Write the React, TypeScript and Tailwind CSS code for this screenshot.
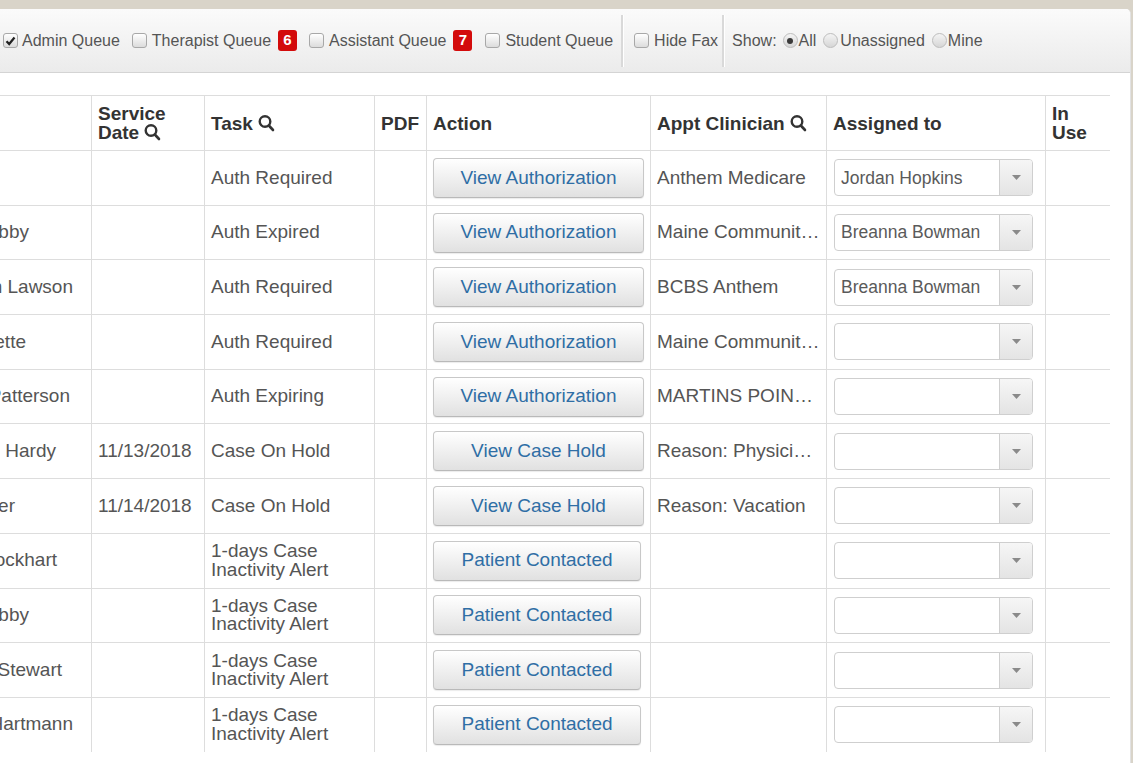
import React from 'react';

type Row = {
    name: string;
    nameW: string;
    date: string;
    task: string;
    action: string;
    actionW: string;
    clinician: string;
    assigned: string;
};

const rows: Row[] = [
    { name: '', nameW: 'w-0', date: '', task: 'Auth Required', action: 'View Authorization', actionW: 'w-[211px]', clinician: 'Anthem Medicare', assigned: 'Jordan Hopkins' },
    { name: 'Kelly Dobby', nameW: 'w-[29px]', date: '', task: 'Auth Expired', action: 'View Authorization', actionW: 'w-[211px]', clinician: 'Maine Community Health Options', assigned: 'Breanna Bowman' },
    { name: 'Megan Lawson', nameW: 'w-[73px]', date: '', task: 'Auth Required', action: 'View Authorization', actionW: 'w-[211px]', clinician: 'BCBS Anthem', assigned: 'Breanna Bowman' },
    { name: 'Paulette Goulette', nameW: 'w-[26px]', date: '', task: 'Auth Required', action: 'View Authorization', actionW: 'w-[211px]', clinician: 'Maine Community Health Options', assigned: '' },
    { name: 'Ann Patterson', nameW: 'w-[70px]', date: '', task: 'Auth Expiring', action: 'View Authorization', actionW: 'w-[211px]', clinician: 'MARTINS POINT HEALTH CARE', assigned: '' },
    { name: 'Jim Hardy', nameW: 'w-[56px]', date: '11/13/2018', task: 'Case On Hold', action: 'View Case Hold', actionW: 'w-[211px]', clinician: 'Reason: Physician Order', assigned: '' },
    { name: 'Ann Miller', nameW: 'w-[15px]', date: '11/14/2018', task: 'Case On Hold', action: 'View Case Hold', actionW: 'w-[211px]', clinician: 'Reason: Vacation', assigned: '' },
    { name: 'Sara Lockhart', nameW: 'w-[57px]', date: '', task: '1-days Case Inactivity Alert', action: 'Patient Contacted', actionW: 'w-[208px]', clinician: '', assigned: '' },
    { name: 'Kelly Dobby', nameW: 'w-[29px]', date: '', task: '1-days Case Inactivity Alert', action: 'Patient Contacted', actionW: 'w-[208px]', clinician: '', assigned: '' },
    { name: 'Ruth Stewart', nameW: 'w-[62px]', date: '', task: '1-days Case Inactivity Alert', action: 'Patient Contacted', actionW: 'w-[208px]', clinician: '', assigned: '' },
    { name: 'Lisa Hartmann', nameW: 'w-[73px]', date: '', task: '1-days Case Inactivity Alert', action: 'Patient Contacted', actionW: 'w-[208px]', clinician: '', assigned: '' },
];

const cols = 'grid grid-cols-[91px_113px_170px_52px_224px_176px_219px_65px]';

function Search() {
    return (
        <svg width="17" height="18" viewBox="0 0 17 18" className="inline-block ml-[5px] -mt-[3px] align-middle">
            <circle cx="7" cy="7.5" r="5.3" fill="none" stroke="#333" strokeWidth="2.4" />
            <line x1="10.8" y1="11.5" x2="15" y2="16" stroke="#333" strokeWidth="2.6" strokeLinecap="round" />
        </svg>
    );
}

function Checkbox({ checked }: { checked?: boolean }) {
    return (
        <span className="w-[15px] h-[15px] shrink-0 rounded-[3px] border border-[#a8a8a8] bg-gradient-to-b from-[#ffffff] to-[#dcdcdc] flex items-center justify-center">
            {checked && (
                <svg width="11" height="10" viewBox="0 0 11 10">
                    <path d="M1.5 5.2 L4.2 8 L9.5 1.5" fill="none" stroke="#222" strokeWidth="2.2" />
                </svg>
            )}
        </span>
    );
}

function Radio({ checked }: { checked?: boolean }) {
    return (
        <span className="w-[15px] h-[15px] shrink-0 rounded-full border border-[#bdbdbd] bg-gradient-to-b from-[#f4f4f4] to-[#d6d6d6] flex items-center justify-center">
            {checked && <span className="w-[6px] h-[6px] rounded-full bg-[#3a3a3a]" />}
        </span>
    );
}

function Badge({ n }: { n: number }) {
    return (
        <span className="ml-[7px] w-[19px] h-[21px] rounded-[3px] bg-[#d30b0b] text-white text-[15px] font-bold flex items-center justify-center">
            {n}
        </span>
    );
}

function Sep() {
    return <span className="w-[3px] h-[52px] border-l-2 border-[#d9d9d9] border-r border-r-white" />;
}

function Select({ value }: { value: string }) {
    return (
        <div className="w-[199px] h-[37px] ml-[1px] rounded-[4px] border border-[#cfcfcf] bg-white flex overflow-hidden">
            <div className="flex-1 min-w-0 overflow-hidden flex items-center pl-[6px] text-[17.5px] text-[#5a5a5a] whitespace-nowrap">{value}</div>
            <div className="w-[33px] border-l border-[#cfcfcf] bg-gradient-to-b from-[#f6f6f6] to-[#e4e4e4] flex items-center justify-center">
                <svg width="9" height="5" viewBox="0 0 9 5">
                    <path d="M0 0 L9 0 L4.5 5 Z" fill="#8a8a8a" />
                </svg>
            </div>
        </div>
    );
}

export default function App() {
    const cell = 'border-l border-[#dddddd] px-[6px] flex items-center overflow-hidden';

    return (
        <div className="w-[1133px] h-[763px] overflow-hidden bg-[#d9d4c9] pt-[9px] font-['Liberation_Sans',Arial,sans-serif]">
            <div className="w-[1131px] h-[754px] bg-white rounded-tr-[5px] border-r border-[#e2e2e2] overflow-hidden">
                {/* Queue filters */}
                <div className="h-[64px] bg-gradient-to-b from-[#fbfbfb] to-[#ebebeb] border-b border-[#d4d4d4] flex items-center pl-[3px] text-[16px] text-[#555] whitespace-nowrap">
                    <Checkbox checked />
                    <span className="ml-[4px]">Admin Queue</span>
                    <span className="ml-[12px]"><Checkbox /></span>
                    <span className="ml-[5px]">Therapist Queue</span>
                    <Badge n={6} />
                    <span className="ml-[12px]"><Checkbox /></span>
                    <span className="ml-[5px]">Assistant Queue</span>
                    <Badge n={7} />
                    <span className="ml-[13px]"><Checkbox /></span>
                    <span className="ml-[5px]">Student Queue</span>
                    <span className="ml-[8px] flex"><Sep /></span>
                    <span className="ml-[10px]"><Checkbox /></span>
                    <span className="ml-[5px]">Hide Fax</span>
                    <span className="ml-[4px] flex"><Sep /></span>
                    <span className="ml-[7px]">Show:</span>
                    <span className="ml-[6px]"><Radio checked /></span>
                    <span className="ml-[1px]">All</span>
                    <span className="ml-[7px]"><Radio /></span>
                    <span className="ml-[2px]">Unassigned</span>
                    <span className="ml-[7px]"><Radio /></span>
                    <span className="ml-[1px]">Mine</span>
                </div>

                {/* Task table */}
                <div className="pt-[22px] w-[1110px]">
                    <div className={`${cols} h-[55px] border-t border-[#dddddd] text-[19px] font-bold text-[#333] leading-[19px]`}>
                        <div />
                        <div className={cell}><span>Service Date<Search /></span></div>
                        <div className={cell}><span>Task<Search /></span></div>
                        <div className={cell}>PDF</div>
                        <div className={cell}>Action</div>
                        <div className={cell}><span className="whitespace-nowrap">Appt Clinician<Search /></span></div>
                        <div className={cell}>Assigned to</div>
                        <div className={cell}>In Use</div>
                    </div>

                    {rows.map((r, i) => (
                        <div key={i} className={`${cols} h-[54.7px] border-t border-[#dddddd] text-[19px] text-[#555] leading-[18.5px]`}>
                            <div className="flex items-center overflow-hidden">
                                <div className={`${r.nameW} flex justify-end whitespace-nowrap`}>
                                    <span>{r.name}</span>
                                </div>
                            </div>
                            <div className={cell}>{r.date}</div>
                            <div className={cell}>{r.task}</div>
                            <div className={cell} />
                            <div className={cell}>
                                <button className={`${r.actionW} h-[40px] shrink-0 rounded-[4px] border border-[#c8c8c8] border-b-[#b9b9b9] bg-gradient-to-b from-[#ffffff] to-[#e1e1e1] shadow-[0_1px_1px_rgba(0,0,0,0.08)] text-[19px] text-[#2f6ea5] text-center`}>
                                    {r.action}
                                </button>
                            </div>
                            <div className={cell}>
                                <span className="truncate">{r.clinician}</span>
                            </div>
                            <div className={cell}>
                                <Select value={r.assigned} />
                            </div>
                            <div className={cell} />
                        </div>
                    ))}
                </div>
            </div>
        </div>
    );
}
